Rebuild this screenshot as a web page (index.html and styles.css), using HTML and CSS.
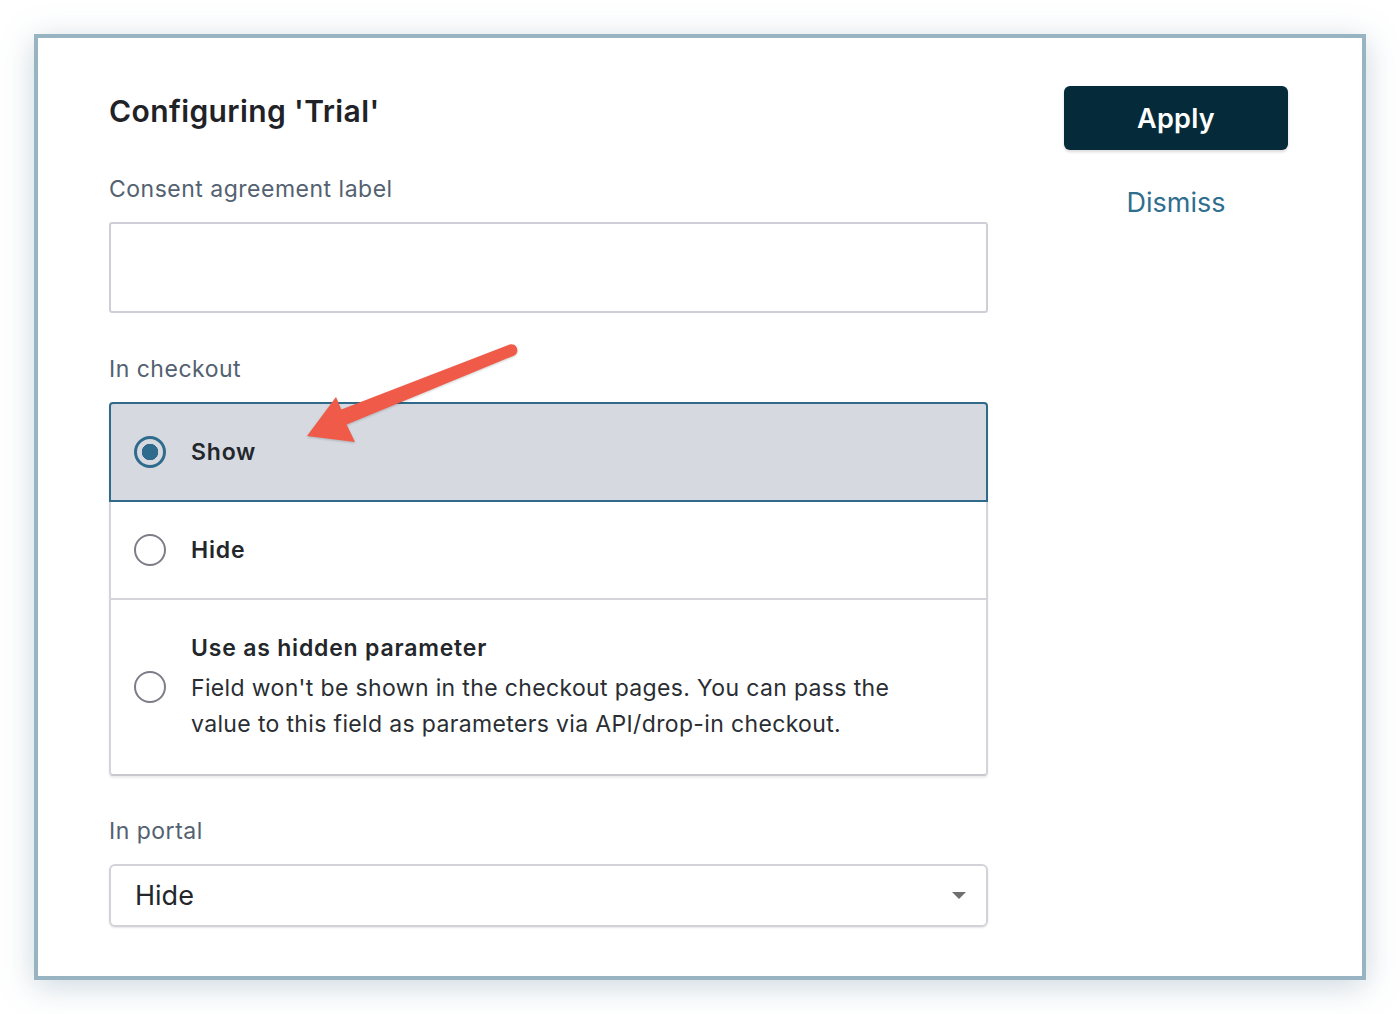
FILE: index.html
```html
<!DOCTYPE html>
<html lang="en">
<head>
	<meta charset="utf-8">
	<title>Configuring 'Trial'</title>
	<link rel="stylesheet" href="styles.css">
</head>
<body>
<div class="frame">
	<div class="main">
		<h1 class="title">Configuring 'Trial'</h1>

		<label class="field-label" for="consent">Consent agreement label</label>
		<input type="text" id="consent" class="text-input">

		<div class="field-label">In checkout</div>
		<div class="options">
			<div class="option selected">
				<span class="radio"></span>
				<div class="option-text"><b>Show</b></div>
			</div>
			<div class="option">
				<span class="radio"></span>
				<div class="option-text"><b>Hide</b></div>
			</div>
			<div class="option tall">
				<span class="radio"></span>
				<div class="option-text">
					<b>Use as hidden parameter</b>
					<p class="option-desc">Field won't be shown in the checkout pages. You can pass the value to this field as parameters via API/drop-in checkout.</p>
				</div>
			</div>
		</div>

		<div class="field-label">In portal</div>
		<div class="select">
			<span>Hide</span>
			<span class="caret"></span>
		</div>
	</div>

	<div class="side">
		<button class="btn-apply">Apply</button>
		<a class="dismiss" href="#">Dismiss</a>
	</div>
</div>

<!-- callout arrow drawn over the form -->
<svg class="callout" width="1400" height="1014" viewBox="0 0 1400 1014">
	<path d="M509.7 344.5 L341.3 409.5 L336 397 L307 436 L355 442 L346.6 424.4 L514.3 355.5 A6 6 0 0 0 509.7 344.5 Z" fill="#f05a48"/>
</svg>
</body>
</html>
```

FILE: styles.css
```css
html, body {
	margin: 0;
	background: #fff;
}
body {
	font-family: Inter, "Noto Sans", sans-serif;
	color: #23272b;
	padding: 34px;
}
.frame {
	display: flex;
	width: 1324px;
	height: 938px;
	box-sizing: content-box;
	border: 4px solid #98b4c2;
	box-shadow: 0 6px 30px rgba(110, 140, 160, 0.35);
	background: #fff;
}
.main {
	width: 879px;
	margin-left: 71px;
	display: flex;
	flex-direction: column;
}
.title {
	margin: 55px 0 0;
	font-size: 30px;
	line-height: 36px;
	font-weight: 600;
	letter-spacing: 0.4px;
	color: #1f2328;
}
.field-label {
	display: block;
	margin-top: 46px;
	font-size: 23px;
	line-height: 28px;
	color: #536170;
	letter-spacing: 0.5px;
}
.text-input {
	margin-top: 19px;
	height: 91px;
	box-sizing: border-box;
	border: 2px solid #cfcfd7;
	border-radius: 3px;
	font: inherit;
}
.text-input + .field-label { margin-top: 42px; }

/* radio list */
.options {
	margin-top: 19px;
	display: flex;
	flex-direction: column;
	border-radius: 4px;
	box-shadow: 0 2px 2px rgba(0, 0, 0, 0.08);
}
.option {
	display: flex;
	align-items: center;
	gap: 25px;
	padding: 31px 23px;
	border: 2px solid #d4d4da;
	margin-top: -2px;
	background: #fff;
}
.option:first-child { margin-top: 0; border-radius: 4px 4px 0 0; }
.option:last-child { border-radius: 0 0 4px 4px; border-bottom-color: #c8c8cf; }
.option.selected {
	position: relative;
	z-index: 1;
	background: #d6dae0;
	border-color: #2f6a8a;
}
.option.tall { padding: 31px 23px 32px; }
.radio {
	flex: none;
	width: 32px;
	height: 32px;
	box-sizing: border-box;
	border: 2px solid #7d7d88;
	border-radius: 50%;
	background: #fff;
}
.selected .radio {
	border: 3px solid #2f6b8c;
	background: radial-gradient(circle, #2f6b8c 0 8px, #d6dae0 8.5px);
}
.option-text {
	max-width: 730px;
	font-size: 23px;
	line-height: 34px;
	color: #23272b;
	letter-spacing: 0.4px;
}
.option-text b {
	font-weight: 600;
	letter-spacing: 0.8px;
}
.option-desc {
	margin: 5px 0 0;
	line-height: 36px;
	letter-spacing: 0.35px;
	color: #2a2e33;
}
.options + .field-label { margin-top: 41px; }

/* dropdown */
.select {
	margin-top: 19px;
	height: 63px;
	box-sizing: border-box;
	border: 2px solid #d2d2d9;
	border-radius: 6px;
	box-shadow: 0 1px 2px rgba(0, 0, 0, 0.1);
	display: flex;
	align-items: center;
	justify-content: space-between;
	padding: 0 20px 0 24px;
	font-size: 27px;
	color: #23272b;
}
.caret {
	width: 0;
	height: 0;
	border-left: 7px solid transparent;
	border-right: 7px solid transparent;
	border-top: 7px solid #707070;
}

/* right column */
.side {
	margin-left: 76px;
	width: 224px;
	display: flex;
	flex-direction: column;
	align-items: center;
}
.btn-apply {
	margin-top: 48px;
	width: 224px;
	height: 64px;
	border: 0;
	border-radius: 6px;
	background: #052b3a;
	color: #fff;
	font-family: inherit;
	font-size: 27px;
	font-weight: 600;
	letter-spacing: 0.3px;
	box-shadow: 0 2px 3px rgba(0, 0, 0, 0.15);
}
.dismiss {
	margin-top: 36px;
	font-size: 27px;
	line-height: 34px;
	color: #2f6e8e;
	text-decoration: none;
}

.callout {
	position: absolute;
	left: 0;
	top: 0;
	z-index: 2;
	pointer-events: none;
	filter: drop-shadow(0 1px 1px rgba(0, 0, 0, 0.2));
}
```
